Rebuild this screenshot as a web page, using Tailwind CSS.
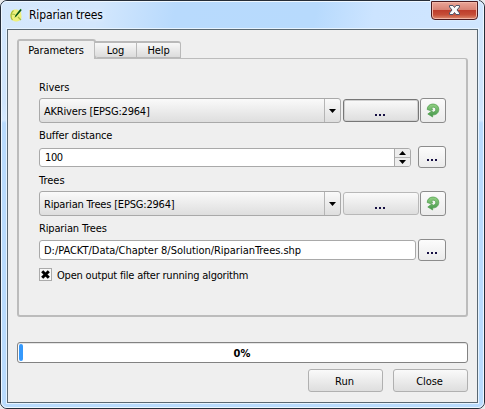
<!DOCTYPE html>
<html lang="en"><head><meta charset="utf-8"><title>Riparian trees</title>
<script src="https://cdn.jsdelivr.net/npm/@tailwindcss/browser@4"></script></head>
<body class="w-[485px] h-[409px] overflow-hidden bg-[#e8eaec]">
<svg class="absolute w-0 h-0"><defs>
<linearGradient id="g" x1="0" y1="0" x2="0" y2="1"><stop offset="0" stop-color="#93d184"/><stop offset="1" stop-color="#43964a"/></linearGradient>
<symbol id="iterate" viewBox="0 0 14 15"><path d="M1.200 6.500C1.200 3 3.800 1 7 1c3.500 0 5.800 2.300 5.800 5.300 0 3.400-2.300 5.700-6.300 5.700l.2 2L1.800 11l4.400-3.200.2 1.500C8.600 9.300 9.700 8 9.700 6.500 9.700 5 8.700 4.200 7.300 4.200c-1 0-1.500.5-1.500 1.300l1 .7-2 1.500z" fill="url(#g)" stroke="#4d9c4b" stroke-width=".7"/></symbol>
</defs></svg>
<div class="w-[485px] h-[409px] rounded-[7px] border border-[#252d38] bg-[#bbdcfe] font-['DejaVu_Sans_Condensed','DejaVu_Sans',sans-serif] font-stretch-condensed text-[11px] leading-[14px] text-black">
<div class="w-full h-full rounded-[6px] border border-[#eef7ff] flex flex-col px-[5px] pb-[4px] bg-[linear-gradient(180deg,#d3e7fd_0,#cfe5fc_100px,#d5e9fe_118px,#b9dbfd_121px,#b9dbfd_100%)]">
<header class="h-[26px] -mx-[5px] pl-[7px] pr-[5px] flex items-start shrink-0 rounded-t-[6px] bg-[linear-gradient(100deg,#d5e8fc_0,#d3e7fd_20%,#b8dafd_36%,#b7dafd_65%,#cce4ff_77%,#d0e6ff_100%)]">
<svg class="mt-[6px] w-[14px] h-[15px]" viewBox="0 0 14 15"><path d="M5 1.500C2 3 .8 6.500 1.800 9.800c1 3 4 4.400 7.200 3.400 2-.6 3.200-2 3.600-4L12 4 8 1.500z" fill="#eef07c"/><path d="M4.500 2.500C1.800 4.500 1 9 3.500 12m5.500-3 3 3M3 6l3 .5" stroke="#a3bd3c" stroke-width="1.200" fill="none"/><path d="m5.500 10 1-3L11.500.8l1.300 1.300L8 7.500z" fill="#28852a"/><path d="m6.500 8.500 5.300-6.700" stroke="#0b4d13" stroke-width="1.200"/></svg>
<h1 class="ml-[6px] mt-[5px] text-[12px] leading-[16px] tracking-[-0.14px] whitespace-nowrap [text-shadow:0_0_5px_white]">Riparian trees</h1>
<button class="ml-auto -mt-px w-[47px] h-[19px] rounded-b-[4px] border border-[#4b1b20] flex items-center justify-center shadow-[inset_0_0_0_1px_#f3b6a7,0_0_0_1px_#d9ebfd] bg-[linear-gradient(180deg,#eaa598_0,#d98475_45%,#bd3c2b_48%,#c64e38_75%,#dd8c70_100%)]"><svg class="w-[13px] h-[12px] mr-px mb-px" viewBox="0 0 13 12"><path d="M1.500 1.500h3.500L6.500 3.500 8 1.500h3.500v1.500L9 6l2.500 3v1.500H8L6.500 8.500 5 10.500H1.500V9L4 6 1.500 3z" fill="#fafafa" stroke="#505468"/></svg></button>
</header>
<main class="relative flex-1 min-h-0 border border-[#5a6872] outline outline-[#e6f3ff] bg-[#efefef] mt-px flex flex-col pl-[9px] pr-[10px] pt-[9px]">
<nav class="flex h-[19px] shrink-0 items-end z-10 whitespace-nowrap">
<div class="w-[79px] h-[20px] -mb-px border-2 border-b-0 border-[#bcbcbc] rounded-t-[3px] bg-[#efefef] flex items-center justify-center pr-[1px] pt-px tracking-[-0.1px]">Parameters</div>
<div class="w-[42px] h-[17px] border-t-2 border-r border-b border-[#b9b9b9] bg-linear-to-b from-[#f8f8f8] to-[#dcdcdc] flex items-center justify-center -ml-px rounded-bl-[3px] pt-[2px]">Log</div>
<div class="w-[44px] h-[17px] border-t-2 border-r border-b border-[#b9b9b9] rounded-tr-[3px] bg-linear-to-b from-[#f8f8f8] to-[#dcdcdc] flex items-center justify-center pt-[2px] tracking-[-0.1px]">Help</div>
</nav>
<section class="w-[451px] h-[259px] shrink-0 border-2 border-t border-[#bcbcbc] rounded-[3px] rounded-tl-none pl-[20px] pt-[21px] flex flex-col whitespace-nowrap">
<div class="h-[18px] pt-px shrink-0 tracking-[-0.1px]">Rivers</div>
<div class="flex items-center h-[25px] shrink-0">
<div class="w-[302px] h-[25px] border border-[#a9a9a9] rounded-[3px] bg-linear-to-b from-[#fafafa] to-[#dedede] flex items-center"><span class="ml-[4px] mt-[2px] grow tracking-[-0.2px]">AKRivers [EPSG:2964]</span><div class="h-full w-[16px] border-l border-[#b5b5b5] flex items-center justify-center"><svg class="w-[7px] h-[4px]"><path d="M0 0h7L3.500 4z"/></svg></div></div>
<button class="ml-[2px] w-[76px] h-[23px] border border-[#777] rounded-[3px] bg-linear-to-b from-[#fafafa] to-[#dedede] shadow-[inset_0_0_0_1px_#d0d0d0] flex items-center justify-center gap-[2px] pt-[8px] pr-[2px]"><i class="size-[2px] bg-[#171044]"></i><i class="size-[2px] bg-[#171044]"></i><i class="size-[2px] bg-[#171044]"></i></button>
<button class="ml-px w-[26px] h-[25px] border border-[#8c8c8c] rounded-[3px] bg-linear-to-b from-[#fbfbfb] to-[#ebebeb] flex items-center justify-center"><svg class="w-[14px] h-[15px]"><use href="#iterate"/></svg></button>
</div>
<div class="h-[23px] pt-[6px] shrink-0 tracking-[-0.13px]">Buffer distance</div>
<div class="flex items-center h-[22px] shrink-0">
<div class="w-[372px] h-[19px] border border-[#a9a9a9] rounded-[3px] bg-white flex items-center"><span class="ml-[5px] mt-px grow tracking-[-0.4px]">100</span><div class="w-[16px] h-[17px] border-l border-[#a9a9a9] bg-[#ededed] flex flex-col rounded-r-[2px]"><div class="h-[9px] border-b border-[#b5b5b5] flex items-center justify-center"><svg class="w-[7px] h-[4px]"><path d="M3.500 0 7 4H0z"/></svg></div><div class="h-[8px] flex items-center justify-center"><svg class="w-[7px] h-[4px]"><path d="M0 0h7L3.500 4z"/></svg></div></div></div>
<button class="ml-[7px] w-[28px] h-[22px] border border-[#8c8c8c] rounded-[3px] bg-linear-to-b from-[#fcfcfc] to-[#ebebeb] flex items-center justify-center gap-[2px] pt-[6px] pr-px"><i class="size-[2px] bg-[#171044]"></i><i class="size-[2px] bg-[#171044]"></i><i class="size-[2px] bg-[#171044]"></i></button>
</div>
<div class="h-[23px] pt-[6px] shrink-0">Trees</div>
<div class="flex items-center h-[25px] shrink-0">
<div class="w-[302px] h-[25px] border border-[#a9a9a9] rounded-[3px] bg-linear-to-b from-[#fafafa] to-[#dedede] flex items-center"><span class="ml-[4px] mt-[2px] grow tracking-[-0.19px]">Riparian Trees [EPSG:2964]</span><div class="h-full w-[16px] border-l border-[#b5b5b5] flex items-center justify-center"><svg class="w-[7px] h-[4px]"><path d="M0 0h7L3.500 4z"/></svg></div></div>
<button class="ml-[2px] w-[76px] h-[23px] border border-[#b8b8b8] rounded-[3px] bg-linear-to-b from-[#fafafa] to-[#dedede] flex items-center justify-center gap-[2px] pt-[8px] pr-[2px]"><i class="size-[2px] bg-[#171044]"></i><i class="size-[2px] bg-[#171044]"></i><i class="size-[2px] bg-[#171044]"></i></button>
<button class="ml-px w-[26px] h-[25px] border border-[#8c8c8c] rounded-[3px] bg-linear-to-b from-[#fbfbfb] to-[#ebebeb] flex items-center justify-center"><svg class="w-[14px] h-[15px]"><use href="#iterate"/></svg></button>
</div>
<div class="h-[23px] pt-[6px] shrink-0 tracking-[-0.15px]">Riparian Trees</div>
<div class="flex items-center h-[22px] shrink-0">
<div class="w-[377px] h-[20px] border border-[#a9a9a9] rounded-[3px] bg-white flex items-center"><span class="ml-[4px] mt-[2px] tracking-[-0.03px]">D:/PACKT/Data/Chapter 8/Solution/RiparianTrees.shp</span></div>
<button class="ml-[2px] w-[28px] h-[22px] border border-[#8c8c8c] rounded-[3px] bg-linear-to-b from-[#fcfcfc] to-[#ebebeb] flex items-center justify-center gap-[2px] pt-[6px] pr-px"><i class="size-[2px] bg-[#171044]"></i><i class="size-[2px] bg-[#171044]"></i><i class="size-[2px] bg-[#171044]"></i></button>
</div>
<div class="mt-[7px] flex items-center h-[13px] shrink-0"><div class="size-[13px] border border-[#aaa] bg-[#f8f8f8] flex items-center justify-center"><svg class="size-[9px]" viewBox="0 0 9 9"><path d="m1.200 1.200 6.600 6.600m0-6.600L1.200 7.800" stroke="#000" stroke-width="3"/></svg></div><span class="ml-[5px] mt-[2px] tracking-[-0.2px]">Open output file after running algorithm</span></div>
</section>
<div class="mt-[25px] w-[451px] h-[21px] shrink-0 border border-[#828282] rounded-[3px] bg-white shadow-[inset_0_1px_0_#e5e5e5] flex items-center justify-center relative"><div class="absolute left-[1px] top-px w-[4px] h-[17px] rounded-[2px] bg-[#3599fc]"></div><span class="font-bold mt-[2px] mr-px">0%</span></div>
<div class="mt-[6px] flex justify-end gap-[10px] w-[451px] h-[23px] shrink-0"><button class="w-[75px] border border-[#b0b0b0] rounded-[3px] bg-linear-to-b from-[#fafafa] to-[#dedede] pt-[2px] pr-[2px]">Run</button><button class="w-[75px] border border-[#b0b0b0] rounded-[3px] bg-linear-to-b from-[#fafafa] to-[#dedede] pt-[2px] pr-[2px] tracking-[-0.1px]">Close</button></div>
</main></div></div></body></html>
